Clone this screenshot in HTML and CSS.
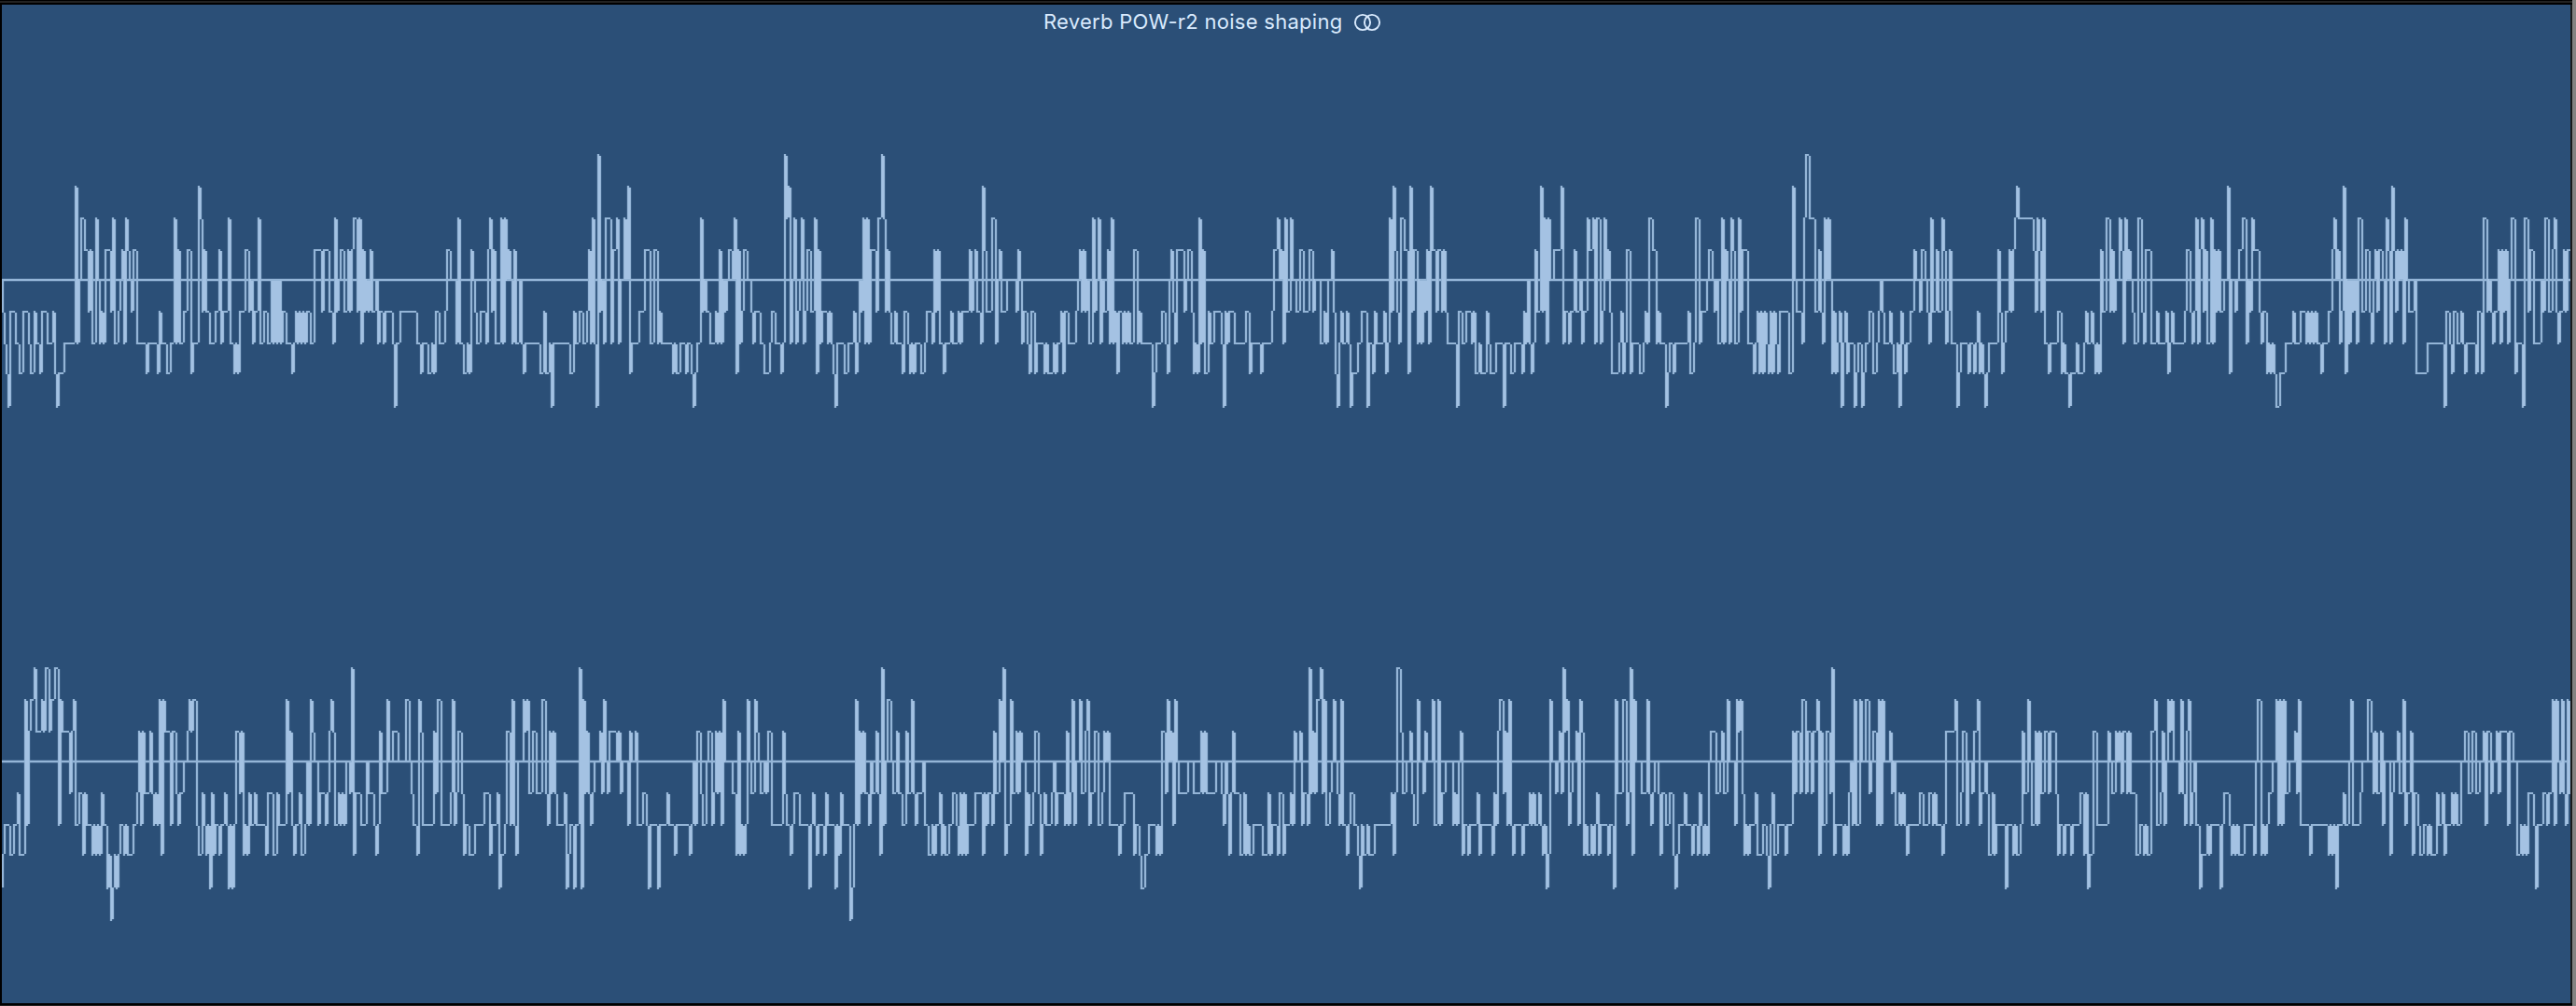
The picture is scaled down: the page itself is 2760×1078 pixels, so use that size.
FILE: index.html
```html
<!DOCTYPE html>
<html lang="en">
<head>
    <meta charset="utf-8">
    <title>Reverb POW-r2 noise shaping</title>
    <link rel="stylesheet" href="styles.css">
</head>
<body>
    <div class="track">
        <div class="region">
            <div class="region-header">
                <span class="region-name">Reverb POW-r2 noise shaping</span>
                <svg class="stereo-icon" viewBox="0 0 30 20">
                    <circle cx="10" cy="10" r="8.1"></circle>
                    <circle cx="20" cy="10" r="8.1"></circle>
                </svg>
            </div>
            <svg class="lane" id="left" viewBox="0 0 2752 517"></svg>
            <svg class="lane" id="right" viewBox="0 0 2752 517"></svg>
        </div>
    </div>
    <script src="waveform.js"></script>
</body>
</html>
```
FILE: styles.css
```css
body {
    margin: 0;
    background: #000;
    font-family: Inter, "Liberation Sans", sans-serif;
}

.track {
    box-sizing: border-box;
    width: 2760px;
    height: 1078px;
    padding-top: 2px;
    padding-left: 2px;
    background: linear-gradient(#000 1px, #222 1px, #222 3px, #000 3px, #000 1077px, #222 1077px);
    border-right: 4px solid #858281;
    overflow: hidden;
}

.region {
    width: 2752px;
    height: 1070px;
    margin-top: 3px;
    background: #2b4f77;
    border-right: 2px solid #1a1a1b;
}

.region-header {
    display: flex;
    align-items: center;
    gap: 12px;
    height: 36px;
    padding-left: 1116px;
    color: #d9eafd;
}

.region-name {
    font-size: 22px;
    line-height: 36px;
    letter-spacing: 0.27px;
    white-space: nowrap;
}

.stereo-icon {
    width: 30px;
    height: 20px;
    margin-top: 2px;
    fill: none;
    stroke: #d9eafd;
    stroke-width: 1.9;
}

.lane {
    display: block;
    width: 2752px;
    height: 517px;
    fill: none;
    stroke-width: 2;
}

.zero {
    stroke: #94b5d7;
    stroke-width: 2.6;
}

.stems {
    stroke: #94b5d7;
    stroke-width: 2.3;
}

.dense {
    stroke: #a4c2e3;
}
```
FILE: waveform.js
```js
// Each block is one fifth of the visible timeline (1568 units wide).
// "230b" = at 230 the sample value changes to step b (a is the highest step).
var SPAN = 552;
var UNITS = 1568;

var left = [
    '0e 9f 15g 20h 26i 31f 48g 60h 71f 88g 94h 105f 111g 122h 128f 145g 162f 168h 173i 179h 196g 230b 235g 241e 247c 258d 270f 275d 281g 292c 298e 304g 309f 315g 321d 338f 344c 350g 361f 366e 372d 378g 384c 389d 395e 401f 406d 418g 447h 452g 480h 486f 492g 509h 520g 532c 537g 543d 548g 560f 571d 583h 588g 605b 611c 617f 622d 628f 640g 656f 668d 674g 680f 697c 702g 713h 719g 725h 730f 747d 759f 765e 771g 777f 788c 793g 805f 816g 827e 833g 838e 844g 850e 855g 861f 872g 890h 895g 901f 907g 912f 918g 924f 930g 935f 947g 958d 981f 987d 1004f 1015g 1021c 1027f 1032e 1038d 1049f 1061d 1066f 1072d 1078c 1089f 1095c 1101g 1106d 1112f 1118e 1123f 1129d 1135f 1146e 1152g 1158f 1169g 1175f 1197g 1203i 1208g 1220f 1271g 1282h 1288g 1305h 1316g 1322h 1328f 1339g 1356f 1361d 1373e 1390g 1396c 1401g 1413h 1424g 1430h 1435d 1441e 1447f 1452g 1464f 1481g 1486d 1492c 1498f 1503d 1509g 1526c 1532g 1538c 1543e 1549d 1555e 1560g 1566d',
    '4g 13e 18g 27h 32g 78h 89f 95h 105g 111i 117g 168h 180f 185g 197f 208g 219f 225d 231g 236c 242g 248i 253a 259f 265e 270g 276c 293g 299d 311c 316g 322e 333c 339e 345b 350h 356g 378f 395d 412g 424d 435g 441f 447g 481h 487g 492h 503g 521h 527g 538h 543i 549h 555g 566c 572f 577e 583f 595g 611f 617g 623d 628g 634e 640f 646e 651d 663e 668c 674h 680d 685g 691f 697d 708e 720f 725g 731f 748g 759h 777g 782f 793g 811h 816g 822a 828c 833b 839g 845e 850c 856g 862f 868e 873c 879g 885f 890d 902f 913c 919h 925d 930g 936f 952g 958f 964g 969h 975i 981g 1003h 1015g 1032f 1038h 1043g 1049e 1055f 1060c 1066g 1072c 1077g 1083d 1100f 1106c 1117a 1123c 1129f 1134d 1140f 1146g 1157f 1163g 1180h 1186f 1197g 1203h 1208g 1214h 1220g 1237h 1248g 1254f 1271g 1277d 1282f 1288d 1294g 1305h 1311g 1328f 1334g 1350f 1356g 1362f 1385d 1390f 1396e 1402d 1407f 1419g 1424b 1430d 1436f 1453c 1464g 1470e 1475d 1481f 1498e 1527f 1533d 1539e 1544g 1550f 1561g 1566h',
    '4f 14h 20g 43h 49g 54h 71g 77h 82g 94f 100h 105f 117g 139f 145e 151d 156f 162d 168f 173e 179g 190c 196f 202e 208c 213g 219e 225f 236d 242g 247c 253g 259f 264h 270f 281g 287f 293g 298f 304g 316d 327g 333f 338g 372i 378h 384g 401f 412g 418h 424e 429d 435f 441g 446d 469f 475e 481d 492f 497h 503g 509h 515c 520g 526d 532h 543f 549g 560f 583g 588i 594f 600g 605f 622g 656f 668h 674g 702h 708g 736f 741d 753c 759e 765d 770g 776c 782f 793c 799e 810f 822d 833f 850d 861f 867e 884g 895f 901g 907e 918d 924f 929h 935i 941g 947f 952g 964f 969g 975i 981h 998g 1009f 1026i 1032g 1043h 1049f 1055g 1078f 1083h 1089g 1095c 1100f 1106b 1112d 1117f 1123g 1129c 1140d 1152h 1157b 1163f 1169d 1180g 1186e 1191g 1197e 1202f 1208d 1214g 1220b 1225d 1237f 1243d 1254f 1260d 1266f 1271g 1299i 1305f 1316g 1327f 1345g 1350f 1356h 1367g 1373h 1390f 1396g 1401h 1418g 1441i 1447g 1464h 1475g 1498h 1504f 1510g 1515e 1521g 1527h 1533g 1538d 1544f 1555b 1560f 1566c',
    '3g 8c 14e 26d 48b 54g 60f 71g 77f 88d 94f 105e 111g 117f 128c 134d 145c 151g 157c 168g 173f 179c 185e 190d 196f 202h 225g 230f 236h 242g 247d 259h 264g 287h 299g 304f 310g 316c 327d 338g 344f 350g 367i 373h 378g 390h 395g 435f 441h 452g 458c 469g 475f 492e 498d 509e 515f 521e 526g 537c 543g 549d 555e 560g 566c 572d 577g 588c 594f 600d 617g 634h 640g 645f 651h 657f 662h 668f 674g 679h 685f 691h 696f 702g 708h 713f 739e 744h 750b 756e 764f 782g 787c 793a 804c 821f 833d 838f 845g 850c 856e 861c 867e 872h 878f 884h 890g 895f 901i 907g 912f 918h 924g 941i 946h 952g 964i 969h 975g 986f 997h 1008g 1014f 1020e 1026f 1031g 1048f 1054g 1060h 1071g 1077i 1083f 1088g 1094h 1100g 1111f 1122d 1128e 1139f 1145d 1156e 1162f 1168g 1174c 1179f 1190d 1196f 1207c 1213d 1219g 1225f 1230d 1236g 1253i 1258h 1264g 1287h 1293g 1304h 1310g 1315f 1321h 1327g 1332h 1338i 1344h 1350g 1378d 1384f 1390h 1395g 1401f 1412d 1418f 1424d 1429c 1435b 1441c 1486d 1492f 1498c 1503d 1509f 1515c 1520g 1532h 1537g 1560f',
    '3h 9g 14h 26i 31h 48g 54h 71g 77f 82g 94f 99g 105h 111g 117h 122d 128f 139c 151f 156d 162f 168e 179c 185d 190g 196c 202e 207d 213e 219f 225g 236c 247f 253g 259d 276g 293f 298g 321f 327h 333g 338f 344g 378f 384d 395f 401g 407f 412c 418g 424d 430c 435f 441d 447g 458c 464g 469d 475f 481d 487f 498e 509b 515h 521e 532f 537e 543d 554c 566g 572e 577f 583c 589d 605f 611g 617f 628h 634g 640h 645g 651h 656i 668h 685g 708f 713g 730f 747g 753f 759g 765f 770g 776f 782g 793h 799g 816f 827d 833c 839e 844d 850g 855f 861b 867h 873e 878g 884e 890f 895e 901g 907c 918f 930d 941f 947g 952e 958d 964f 970d 981e 987g 992c 998d 1004g 1010b 1015d 1021f 1027d 1032e 1038d 1044g 1049c 1055e 1060f 1078e 1083h 1117g 1168i 1174f 1186g 1191h 1197f 1208g 1219f 1225g 1231h 1236g 1265h 1271f 1282h 1288c 1299f 1305e 1310f 1316g 1322f 1333d 1339g 1344d 1350f 1356d 1362g 1367e 1373c 1384h 1390g 1407i 1413c 1424f 1430d 1441g 1464e 1469f 1475c 1486f 1498d 1503c 1509f 1515g 1520f 1532d 1537f 1543d'
];

var right = [
    '0h 9g 14f 31g 43f 54e 60g 77b 82f 88c 94b 105a 111c 128b 134c 139a 151c 157b 168a 179f 185b 190c 213e 219c 225b 230f 242e 253g 259e 264f 281g 287f 292g 298f 304g 310e 316f 327h 332g 338i 344h 350g 355h 361g 367f 378g 384f 390g 407f 418e 424c 430f 435c 441e 458c 464e 469f 475e 481f 486b 492g 498b 503c 520f 526c 537e 543f 549e 560d 571c 577b 583c 588b 600f 606g 617e 623f 628g 634f 640h 645e 651g 657f 668g 674f 685e 691f 697h 702f 708h 714f 720c 731e 737c 742g 748f 754g 760e 765f 776e 782f 811g 816e 833g 844e 850f 873b 878e 884c 890f 896g 901f 912e 918g 929f 935d 941f 947b 952c 958d 969f 975e 992f 998e 1004c 1009b 1015c 1020f 1032e 1037f 1043e 1049f 1055d 1066e 1072a 1077g 1083e 1100f 1117d 1123e 1140f 1145g 1151f 1157c 1163e 1179b 1185d 1197c 1213d 1236b 1248d 1253e 1259f 1270g 1276b 1282c 1287f 1321c 1327e 1333b 1344f 1372e 1378b 1384f 1389e 1395c 1407e 1412g 1418f 1429g 1446f 1474e 1491g 1497f 1514e 1520h 1526g 1537f 1543c 1554f 1560b 1566f',
    '3g 8d 26b 32c 37b 43e 54c 66e 82b 94e 100f 105c 111e 117c 123e 128f 151e 157h 163g 168f 180h 185f 197a 202h 208b 214e 219c 225e 231f 237e 242d 259c 265e 270b 276d 282e 287c 310d 316c 322e 327d 345f 350c 356d 367c 373f 390e 401f 407h 413f 435h 441f 464e 469f 486g 492f 532g 538f 543d 549f 555c 566e 572f 583d 589c 600f 606e 611c 617e 623c 628f 634b 640d 662e 674g 680c 685g 691f 697g 702f 708b 713d 719e 731b 736c 742d 748e 759d 765e 770c 782f 816c 822e 827f 838g 844f 850e 867f 895h 901f 907e 912f 918g 924f 941g 946e 952f 975h 980f 986g 992e 998f 1020i 1026h 1031f 1037b 1043f 1049c 1054e 1060c 1066e 1077f 1083d 1089e 1100c 1106e 1111g 1117a 1123f 1128d 1134b 1145d 1151e 1162c 1168e 1179f 1191c 1196e 1208b 1213e 1219f 1225e 1242d 1248f 1259g 1270f 1276g 1282f 1293e 1299g 1305f 1310g 1322f 1333e 1344f 1350g 1356e 1361g 1367e 1373g 1379f 1401e 1424g 1430e 1435f 1441e 1452f 1458c 1464e 1475b 1481d 1486a 1492g 1498f 1509b 1515e 1526c 1532e 1538c 1543d 1555g 1560e 1566f',
    '3f 9e 14c 26e 31g 37f 43e 48f 65e 71d 77f 82e 105f 111c 117f 122e 128b 134f 140d 151b 157e 168c 174b 179f 185e 196c 208f 219e 225c 231d 236c 242f 270g 276f 287e 316g 321f 333g 339h 350g 361f 384g 390f 395g 401c 412e 418b 424d 430c 435f 441b 447d 452e 481d 498e 520c 526e 532c 537e 566d 583e 589f 594d 600e 606g 611e 617c 622e 640g 651e 657g 662f 668g 680f 708g 725e 731g 736f 753g 759e 770g 776f 793e 799f 804c 810d 822c 827f 833e 844f 850a 856e 861c 867e 873b 884a 890e 895b 901f 912e 918d 924b 929d 935e 941f 947b 952f 964g 969f 975e 986f 998g 1003h 1009f 1015g 1026f 1031g 1048f 1100e 1105g 1111e 1117a 1128c 1134e 1145d 1157c 1162e 1168f 1179b 1185d 1196e 1202c 1208d 1225b 1230f 1242b 1248f 1253e 1265d 1287f 1293e 1299f 1304d 1310c 1316g 1321f 1333g 1339f 1361e 1367g 1373f 1407g 1413e 1418f 1424c 1430b 1441e 1447c 1452f 1458b 1464f 1469g 1475f 1498g 1504f 1520e 1526f 1532e 1537f 1549e 1555f 1560g 1566f',
    '3h 9g 14b 20d 31e 37d 43c 48e 54a 60c 65b 71f 77e 82d 94c 99f 105b 111c 117g 122f 128g 139f 145g 151f 156e 162g 168f 190g 196f 207h 213b 219e 236b 247f 253e 259a 265g 270b 276d 293e 310b 316e 321f 327e 333d 344e 350g 356e 367f 378e 389g 395h 401g 406f 424e 429f 446g 452f 463g 469e 475f 481g 486f 492g 498d 503c 520e 532d 537c 543e 554b 560d 577f 583b 589c 594b 600e 605g 611f 617g 622f 640e 645g 662f 674g 679h 685f 691e 697g 708f 731g 737f 753c 759e 765c 776e 782b 793e 799c 810e 816c 827b 833g 838c 844f 855c 867e 873a 878g 884f 907g 912f 918g 924e 929d 935f 941b 946f 958b 964d 975b 986e 992d 998c 1009f 1015b 1020f 1026b 1032d 1049c 1055e 1060d 1066f 1077e 1083f 1089e 1094f 1100g 1106f 1140e 1151f 1168e 1180f 1185e 1191f 1208g 1214f 1219c 1248b 1253f 1265e 1270c 1282f 1287d 1299e 1305c 1316b 1321f 1327e 1338d 1344e 1350g 1361e 1367g 1373f 1401h 1407f 1424g 1430f 1435g 1446f 1452c 1458e 1469b 1475d 1481f 1492c 1498f 1503c 1509e 1520c 1532e 1537c 1555e 1560g 1566f',
    '9g 14f 31g 37f 60e 71g 77e 82h 88g 99c 111f 145c 151d 156e 168c 173d 179c 185e 190c 202e 207c 213e 230g 242f 253g 259f 264g 276c 287b 293f 304e 310c 316f 321d 327b 333c 338b 344d 361e 367b 372e 378f 384c 390b 395f 401e 407d 412f 424h 429g 446f 452g 458f 486h 492f 498e 515f 520g 526f 532g 537f 543g 560f 588g 594d 600b 611g 617f 622g 628f 634e 645d 656b 662f 668b 673f 679b 685e 696d 713c 719e 725b 730f 759g 765f 816g 821f 827g 833f 838h 844f 861e 867f 878d 884b 890f 912e 918d 935b 946c 952e 958c 964e 975c 981f 986d 1003g 1009e 1015d 1026c 1032e 1043b 1049f 1055e 1066c 1072g 1077e 1089f 1094g 1106f 1117g 1123f 1128g 1145e 1151f 1162e 1168g 1174f 1191e 1197f 1202e 1208f 1219d 1231c 1242e 1253c 1265e 1276d 1287c 1293f 1299c 1310e 1316d 1327c 1333e 1338c 1361f 1367c 1378d 1389g 1401f 1407g 1412f 1418g 1424e 1441f 1446h 1452f 1469e 1481f 1486e 1497b 1503f 1509b 1515d 1520e 1526b 1532e 1537f 1543b 1549e'
];

// one value per two pixel column
function expand(blocks) {
    var samples = [];
    blocks.forEach(function (block, n) {
        block.split(' ').forEach(function (item) {
            var x = n * SPAN + parseInt(item) * SPAN / UNITS;
            var col = Math.max(0, Math.round((x - 1) / 2) - 1);
            samples[col] = item.charCodeAt(item.length - 1) - 97;
        });
    });
    for (var i = 1; i < 1376; i++) {
        if (samples[i] === undefined) {
            samples[i] = samples[i - 1];
        }
    }
    return samples;
}

function draw(id, blocks, steps, zero) {
    var samples = expand(blocks);
    var stems = '';
    var dense = '';
    var last = null;
    var prev = steps[blocks[0].charCodeAt(1) - 97];
    for (var i = 0; i < 1376; i++) {
        var y = steps[samples[i]];
        var x = i * 2 + 1;
        var from, to;
        if (y < prev) {
            from = y - 1;
            to = prev - 1;
        } else if (y > prev) {
            from = prev + 1;
            to = y + 1;
        } else {
            from = y - 1;
            to = y + 1;
        }
        stems += 'M' + x + ' ' + from + 'V' + to;
        // neighbouring stems merge into a brighter block
        if (last) {
            var top = Math.max(from, last[0]);
            var bottom = Math.min(to, last[1]);
            if (bottom - top > 4) {
                dense += 'M' + (x - 1) + ' ' + top + 'V' + bottom;
            }
        }
        last = [from, to];
        prev = y;
    }
    document.getElementById(id).innerHTML =
        '<path class="zero" d="M0 ' + zero + 'H2752"/>' +
        '<path class="stems" d="' + stems + '"/>' +
        '<path class="dense" d="' + dense + '"/>';
}

draw('left', left, [125, 159, 193, 227, 259, 293, 327, 359, 395], 259);
draw('right', right, [158, 192, 226, 258, 292, 326, 358, 394, 428], 258);
```
